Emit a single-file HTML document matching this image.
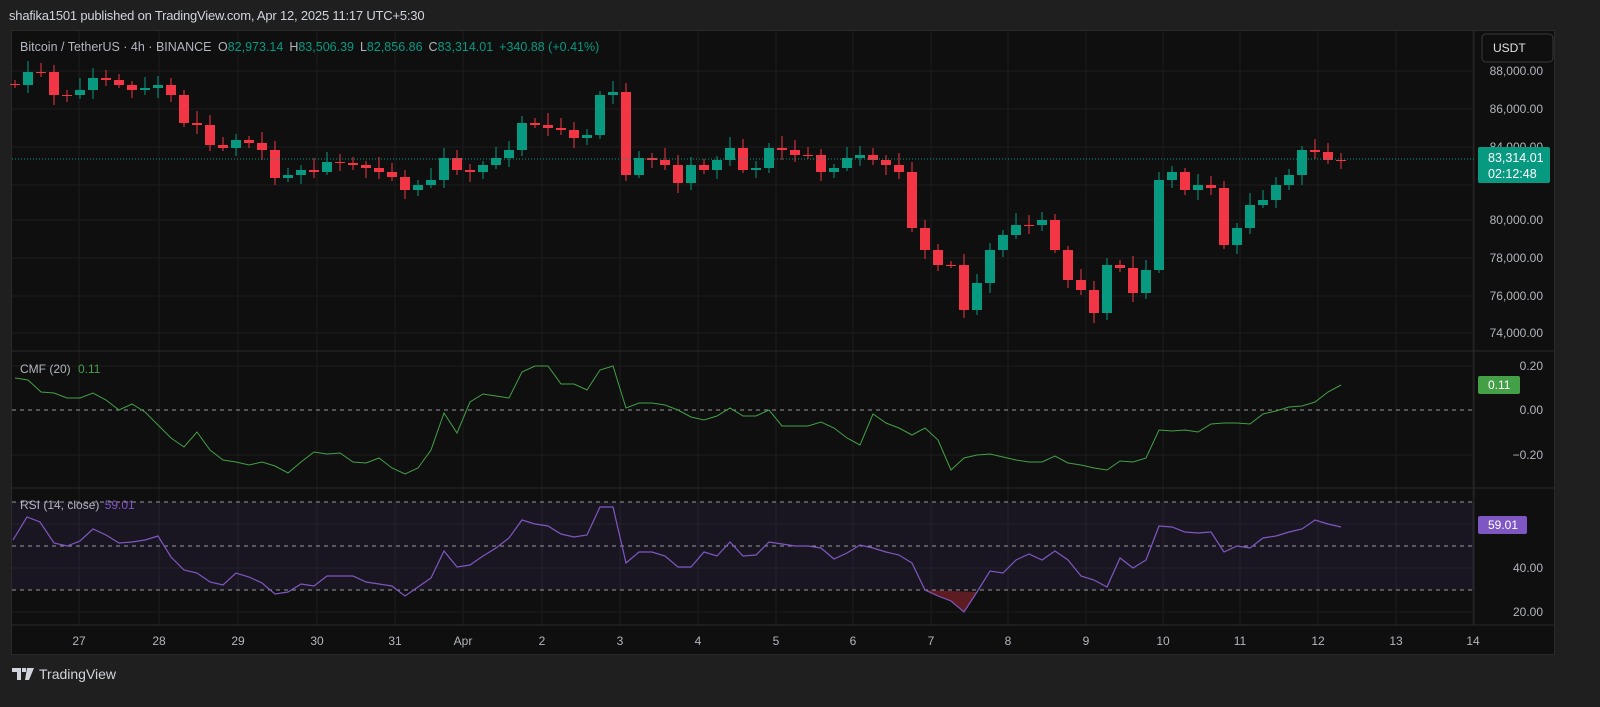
<!DOCTYPE html>
<html><head><meta charset="utf-8"><style>
body{margin:0;width:1600px;height:707px;background:#1f1f1f;overflow:hidden;font-family:"Liberation Sans",sans-serif;position:relative}
.hdr{position:absolute;left:9px;top:8px;color:#d1d4dc;font-size:13px;letter-spacing:-0.2px}
.frame{position:absolute;left:11px;top:30px;width:1544px;height:625px;background:#0f0f0f;border:1px solid #2a2a2a;box-sizing:border-box}
svg{position:absolute;left:0;top:0}
.ft{position:absolute;left:12px;top:666px;color:#d1d4dc;font-size:14px;display:flex;align-items:center;gap:5px}
</style></head><body>
<div class="hdr">shafika1501 published on TradingView.com, Apr 12, 2025 11:17 UTC+5:30</div>
<div class="frame"></div>
<svg id="s" width="1600" height="707" xmlns="http://www.w3.org/2000/svg" font-family="Liberation Sans, sans-serif"></svg>
<div class="ft"><svg width="22" height="12" viewBox="0 0 22 12" style="position:static"><path d="M0 0h9v12H5V4H0z M10 0h4v4h-4z M15 0h7l-5 12h-4z" fill="#d1d4dc"/></svg>TradingView</div>
<script>
const s=document.getElementById('s');let h='';
// grid
const xs={27:79,28:159,29:238,30:317,31:395,Apr:463,2:542,3:620,4:698,5:776,6:853,7:931,8:1008,9:1086,10:1163,11:1240,12:1318,13:1396,14:1473};
for(const k in xs){h+=`<line x1="${xs[k]}" y1="31" x2="${xs[k]}" y2="625" stroke="#1c1c1c"/>`;}
[71,109,147,185,220,258,296,333,366,455,524,568,612].forEach(y=>h+=`<line x1="12" y1="${y}" x2="1474" y2="${y}" stroke="#1c1c1c"/>`);
h+=`<line x1="1474" y1="31" x2="1474" y2="625" stroke="#2a2a2a"/>`;
h+=`<line x1="12" y1="351" x2="1554" y2="351" stroke="#2a2a2a"/><line x1="12" y1="488" x2="1554" y2="488" stroke="#2a2a2a"/><line x1="12" y1="625" x2="1554" y2="625" stroke="#2a2a2a"/>`;
// candles
const cy=[85,72,72,95,95,90,78,80,85,90,88,85,95,123,125,145,148,140,143,150,178,175,170,172,162,163,165,168,172,177,190,185,180,158,170,172,165,158,150,123,125,128,130,138,135,95,92,175,158,160,165,183,165,170,160,148,170,168,148,150,155,155,172,168,158,155,160,165,172,228,250,265,265,310,283,250,235,225,225,220,250,280,290,313,265,268,293,270,180,172,190,185,188,245,228,205,200,185,175,150,152,160,160];
let prev=84;
cy.forEach((c,i)=>{const x=15+i*13;const o=prev;const t=Math.min(o,c),b=Math.max(o,c);const col=c<o?'#089981':'#f23645';
const hi=t-4-(i*7%9),lo=b+3+(i*5%8);
h+=`<line x1="${x}" y1="${hi}" x2="${x}" y2="${lo}" stroke="${col}"/><rect x="${x-5}" y="${t}" width="10" height="${Math.max(1,b-t)}" fill="${col}"/>`;prev=c;});
h+=`<line x1="12" y1="159" x2="1474" y2="159" stroke="#089981" stroke-dasharray="1,2"/>`;
// CMF
const cmf="15,378 28,380 41,392 54,393 67,398 80,398 93,393 106,400 119,410 132,404 145,412 158,425 171,438 184,447 197,432 210,450 223,460 236,462 249,465 262,462 275,466 288,473 301,462 314,452 327,454 340,453 353,462 366,463 379,458 392,468 405,474 418,468 431,450 444,413 457,433 470,402 483,394 496,396 509,398 522,372 535,366 548,366 561,384 574,384 587,390 600,370 613,366 626,408 639,403 652,403 665,405 678,410 691,417 704,420 717,416 730,408 743,416 756,416 769,410 782,426 795,426 808,426 821,422 834,428 847,438 860,445 873,414 886,423 899,428 912,435 925,428 938,440 951,470 964,458 977,455 990,454 1003,457 1016,460 1029,462 1042,462 1055,456 1068,463 1081,465 1094,468 1107,470 1120,461 1133,462 1146,458 1159,430 1172,431 1185,430 1198,432 1211,424 1224,423 1237,423 1250,424 1263,414 1276,411 1289,407 1302,406 1315,402 1328,392 1341,385";
h+=`<line x1="12" y1="410" x2="1474" y2="410" stroke="#9a9a9a" stroke-dasharray="4,4"/><polyline points="${cmf}" fill="none" stroke="#43a047" stroke-width="1"/>`;
// RSI
h+=`<rect x="12" y="502" width="1462" height="88" fill="#7e57c2" fill-opacity="0.1"/>`;
[502,546,590].forEach(y=>h+=`<line x1="12" y1="${y}" x2="1474" y2="${y}" stroke="#9a9a9a" stroke-dasharray="4,4"/>`);
const rsi="13,540 27,517 40,522 54,543 67,546 80,541 93,529 106,535 119,543 132,542 145,540 158,536 171,557 184,570 197,573 210,582 223,585 236,573 249,577 262,583 275,594 288,592 301,584 314,586 327,576 340,576 353,576 366,582 379,584 392,586 405,596 418,587 431,578 444,551 457,567 470,565 483,556 496,548 509,538 522,520 535,524 548,526 561,534 574,537 587,535 600,507 613,507 626,563 639,552 652,552 665,556 678,567 691,567 704,552 717,556 730,542 743,556 756,555 769,542 782,544 795,546 808,546 821,548 834,559 847,553 860,545 873,548 886,552 899,555 912,563 925,590 938,596 951,601 964,612 977,592 990,571 1003,573 1016,560 1029,554 1042,560 1055,551 1068,560 1081,576 1094,580 1107,587 1120,558 1133,568 1146,560 1159,526 1172,527 1185,532 1198,533 1211,532 1224,552 1237,546 1250,548 1263,538 1276,536 1289,532 1302,529 1315,520 1328,524 1341,527";
h+=`<polygon points="925,590 938,596 951,601 964,612 977,592" fill="#f23645" fill-opacity="0.35"/><polyline points="${rsi}" fill="none" stroke="#7e57c2" stroke-width="1.2"/>`;
// axis labels
const T=(x,y,t,c='#b2b5be',a='start',sz=12)=>h+=`<text x="${x}" y="${y}" fill="${c}" font-size="${sz}" text-anchor="${a}">${t}</text>`;
[[71,'88,000.00'],[109,'86,000.00'],[147,'84,000.00'],[220,'80,000.00'],[258,'78,000.00'],[296,'76,000.00'],[333,'74,000.00'],[366,'0.20'],[410,'0.00'],[455,'−0.20'],[568,'40.00'],[612,'20.00']].forEach(([y,t])=>T(1543,y+4,t,'#b2b5be','end'));
h+=`<rect x="1482" y="34" width="71" height="28" rx="4" fill="#0f0f0f" stroke="#3a3a3a"/>`;T(1493,52,'USDT','#e0e0e0');
h+=`<rect x="1478" y="147" width="72" height="36" rx="2" fill="#089981"/>`;T(1488,162,'83,314.01','#fff','start',12.5);T(1488,178,'02:12:48','#fff','start',12.5);
h+=`<rect x="1478" y="376" width="42" height="18" rx="2" fill="#43a047"/>`;T(1488,389,'0.11','#fff');
h+=`<rect x="1478" y="516" width="49" height="18" rx="2" fill="#7e57c2"/>`;T(1488,529,'59.01','#fff');
for(const k in xs)T(xs[k],645,k,'#b2b5be','middle');
// legends
h+=`<text x="20" y="51" font-size="12.5" fill="#b2b5be">Bitcoin / TetherUS · 4h · BINANCE <tspan dx="3">O</tspan><tspan fill="#089981">82,973.14</tspan><tspan dx="6">H</tspan><tspan fill="#089981">83,506.39</tspan><tspan dx="6">L</tspan><tspan fill="#089981">82,856.86</tspan><tspan dx="6">C</tspan><tspan fill="#089981">83,314.01</tspan><tspan dx="6" fill="#089981">+340.88 (+0.41%)</tspan></text>`;
h+=`<text x="20" y="373" font-size="12" fill="#b2b5be">CMF (20) <tspan dx="4" fill="#43a047">0.11</tspan></text>`;
h+=`<text x="20" y="509" font-size="12" fill="#b2b5be">RSI (14, close) <tspan dx="2" fill="#7e57c2">59.01</tspan></text>`;
s.innerHTML=h;
</script>
</body></html>
